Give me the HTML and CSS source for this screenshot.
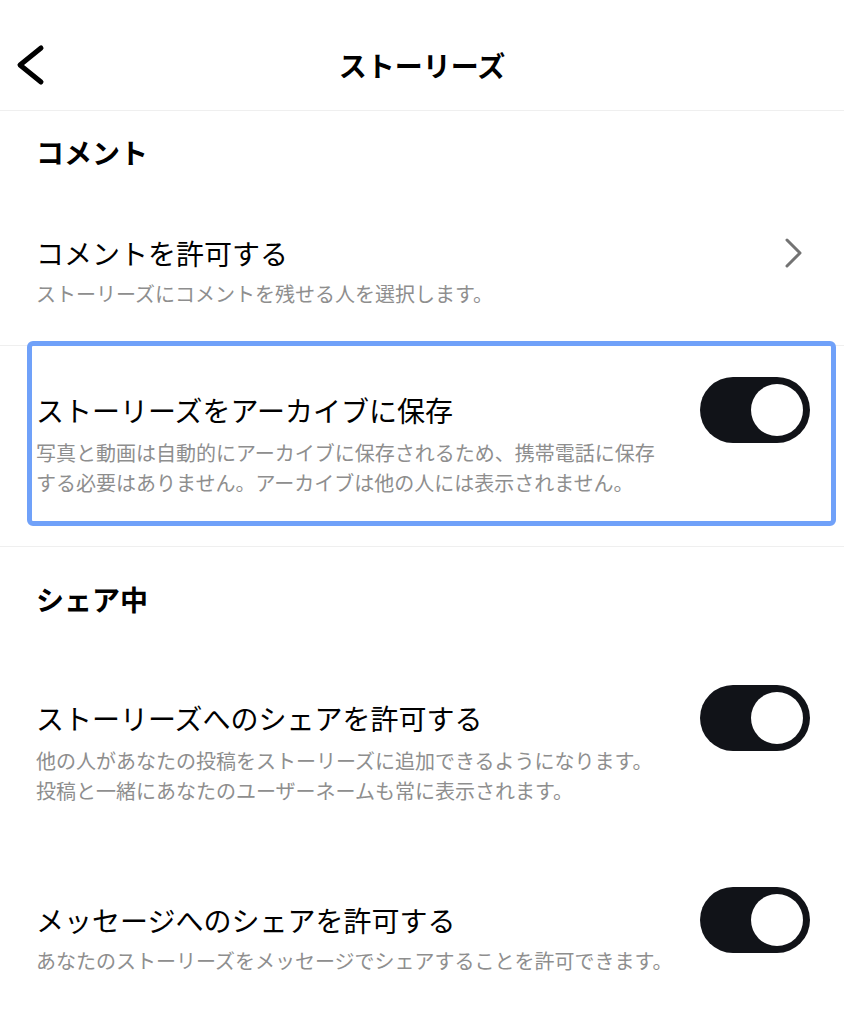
FILE: index.html
```html
<!DOCTYPE html>
<html lang="ja">
  <head>
    <meta charset="utf-8">
    <meta name="viewport" content="width=device-width, initial-scale=1.0">
    <title>ストーリーズ</title>
    <link rel="stylesheet" href="styles.css">
  </head>
  <body>
    <header class="top-bar">
      <div class="back">
        <svg width="30" height="44" viewBox="0 0 30 44">
          <polyline points="25,5 4,22 25,39" fill="none" stroke="#000" stroke-width="5" stroke-linecap="round" stroke-linejoin="round"/>
        </svg>
      </div>
      <h1 class="page-title">ストーリーズ</h1>
      <div></div>
    </header>

    <section class="group first">
      <h2 class="group-title">コメント</h2>
      <div class="row nav-row">
        <div class="row-head">
          <div class="row-title">コメントを許可する</div>
          <svg class="chev" width="20" height="32" viewBox="0 0 20 32">
            <polyline points="4,3 17,16 4,29" fill="none" stroke="#737373" stroke-width="3" stroke-linecap="round" stroke-linejoin="round"/>
          </svg>
        </div>
        <div class="row-desc">ストーリーズにコメントを残せる人を選択します。</div>
      </div>
    </section>

    <section class="row archive">
      <div class="row-head">
        <div class="row-title">ストーリーズをアーカイブに保存</div>
        <div class="toggle"><span class="knob"></span></div>
      </div>
      <div class="row-desc">写真と動画は自動的にアーカイブに保存されるため、携帯電話に保存<br>する必要はありません。アーカイブは他の人には表示されません。</div>
      <div class="highlight"></div>
    </section>

    <section class="group">
      <h2 class="group-title">シェア中</h2>
      <div class="row share-story">
        <div class="row-head">
          <div class="row-title">ストーリーズへのシェアを許可する</div>
          <div class="toggle"><span class="knob"></span></div>
        </div>
        <div class="row-desc">他の人があなたの投稿をストーリーズに追加できるようになります。<br>投稿と一緒にあなたのユーザーネームも常に表示されます。</div>
      </div>
      <div class="row share-msg">
        <div class="row-head">
          <div class="row-title">メッセージへのシェアを許可する</div>
          <div class="toggle"><span class="knob"></span></div>
        </div>
        <div class="row-desc">あなたのストーリーズをメッセージでシェアすることを許可できます。</div>
      </div>
    </section>
  </body>
</html>
```

FILE: styles.css
```css
* {
  box-sizing: border-box;
}

body {
  margin: 0;
  background: #fff;
  color: #000;
  font-family: "Noto Sans CJK JP", "Noto Sans", sans-serif;
  overflow: hidden;
}

.top-bar {
  display: grid;
  grid-template-columns: 90px 1fr 90px;
  align-items: center;
  height: 111px;
  padding-top: 20px;
  border-bottom: 1px solid #efefef;
}

.back {
  padding-left: 16px;
  display: flex;
}

.page-title {
  margin: 0;
  text-align: center;
  font-size: 28px;
  line-height: 36px;
  font-weight: 700;
}

.group {
  padding-top: 24px;
}

.group + .row,
.row + .group {
  border-top: 1px solid #efefef;
}

.group-title {
  margin: 0;
  padding: 0 36px;
  font-size: 28px;
  line-height: 34px;
  font-weight: 700;
}

.row {
  padding: 0 34px 0 36px;
  position: relative;
}

.row-head {
  display: flex;
  align-items: center;
  justify-content: space-between;
  height: 36px;
}

.row-title {
  font-size: 28px;
  line-height: 36px;
  white-space: nowrap;
}

.row-desc {
  margin-top: 8px;
  font-size: 20px;
  line-height: 30px;
  color: #8e8e8e;
  white-space: nowrap;
}

.chev {
  margin-right: 7px;
}

.toggle {
  width: 110px;
  height: 66px;
  margin: -15px 0;
  border-radius: 33px;
  background: #111318;
  display: flex;
  align-items: center;
  justify-content: flex-end;
  padding-right: 7px;
  flex: none;
}

.knob {
  width: 52px;
  height: 52px;
  border-radius: 50%;
  background: #fff;
}

.nav-row {
  margin-top: 66px;
  padding-bottom: 36px;
}

.archive {
  padding-top: 46px;
  padding-bottom: 48px;
}

.archive .row-desc {
  margin-top: 10px;
}

.highlight {
  position: absolute;
  top: -5px;
  left: 27px;
  right: 8px;
  height: 185px;
  border: 5px solid #70a1f9;
  border-radius: 6px;
}

.group:last-child {
  padding-top: 35px;
}

.share-story {
  margin-top: 84px;
}

.share-story .row-desc {
  margin-top: 10px;
}

.share-msg {
  margin-top: 96px;
}
```
